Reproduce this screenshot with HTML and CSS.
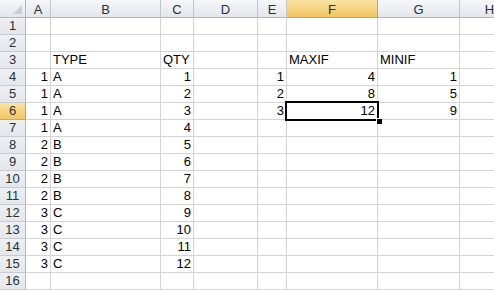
FILE: index.html
```html
<!DOCTYPE html>
<html lang="en">
<head>
  <meta charset="UTF-8">
  <meta name="viewport" content="width=device-width, initial-scale=1.0">
  <title>Book1 - Sheet1</title>
  <link rel="stylesheet" href="styles.css">
</head>
<body>
  <div class="sheet">
    <div class="grid" id="grid"></div>
    <div class="selection"><span class="handle"></span></div>
  </div>

  <script>
    const cols = ['A', 'B', 'C', 'D', 'E', 'F', 'G', 'H'];
    const activeCol = 'F';
    const activeRow = 6;

    // sheet contents, keyed by cell address; n = number (right aligned)
    const cells = {
      B3: 'TYPE', C3: 'QTY', F3: 'MAXIF', G3: 'MINIF',
      E4: 1, F4: 4, G4: 1,
      E5: 2, F5: 8, G5: 5,
      E6: 3, F6: 12, G6: 9
    };
    const types = ['A', 'B', 'C'];
    for (let i = 0; i < 12; i++) {
      const r = i + 4;
      const g = Math.floor(i / 4);
      cells['A' + r] = g + 1;
      cells['B' + r] = types[g];
      cells['C' + r] = i + 1;
    }

    const grid = document.getElementById('grid');
    let html = '<div class="hd corner"><svg width="25" height="17" viewBox="0 0 25 17"><polygon points="22,5 22,14 13,14" fill="#c9cdd2"/></svg></div>';
    cols.forEach(c => {
      html += `<div class="hd col${c === activeCol ? ' on' : ''}">${c}</div>`;
    });
    for (let r = 1; r <= 16; r++) {
      html += `<div class="hd row${r === activeRow ? ' on' : ''}">${r}</div>`;
      cols.forEach(c => {
        const v = cells[c + r];
        if (v === undefined) {
          html += '<div class="cell"></div>';
        } else {
          const cls = typeof v === 'number' ? 'cell num' : 'cell';
          html += `<div class="${cls}">${v}</div>`;
        }
      });
    }
    grid.innerHTML = html;
  </script>
</body>
</html>
```
FILE: styles.css
```css
body {
  margin: 0;
  background: #fff;
  font-family: "Liberation Sans", Arial, sans-serif;
  font-size: 13px;
  color: #000;
  overflow: hidden;
}
.sheet {
  position: relative;
  width: 494px;
  height: 290px;
  overflow: hidden;
}
.grid {
  display: grid;
  grid-template-columns: 26px 25px 110px 33px 64px 29px 91px 82px 60px;
  grid-template-rows: 18px repeat(16, 17px);
}
.cell {
  box-sizing: border-box;
  border-right: 1px solid #d4d4d4;
  border-bottom: 1px solid #d4d4d4;
  padding: 0 2px;
  line-height: 16px;
  white-space: nowrap;
  overflow: hidden;
}
.num {
  text-align: right;
}
.hd {
  box-sizing: border-box;
  background: linear-gradient(#f6f7f9, #e3e6ea);
  color: #27313c;
  text-align: center;
  white-space: nowrap;
}
.col {
  border-right: 1px solid #c3c8cf;
  border-bottom: 1px solid #b1b8c1;
  padding-top: 2px;
  line-height: 15px;
}
.row {
  background: linear-gradient(#eef0f3, #e4e7eb);
  border-right: 1px solid #b1b8c1;
  border-bottom: 1px solid #c8ccd2;
  line-height: 16px;
}
.corner {
  border-right: 1px solid #b1b8c1;
  border-bottom: 1px solid #b1b8c1;
}
.corner svg {
  display: block;
}
.hd.on {
  background: linear-gradient(#fbe3a6, #f3c55f);
  border-color: #e3a23e;
}
.col.on {
  border-bottom-color: #f29536;
}
.row.on {
  border-right-color: #f29536;
}
.selection {
  position: absolute;
  left: 285px;
  top: 101px;
  width: 90px;
  height: 16px;
  border: 2px solid #000;
}
.handle {
  position: absolute;
  right: -5px;
  bottom: -5px;
  width: 5px;
  height: 5px;
  background: #000;
  border: 1px solid #fff;
  border-right: 0;
  border-bottom: 0;
}
```
